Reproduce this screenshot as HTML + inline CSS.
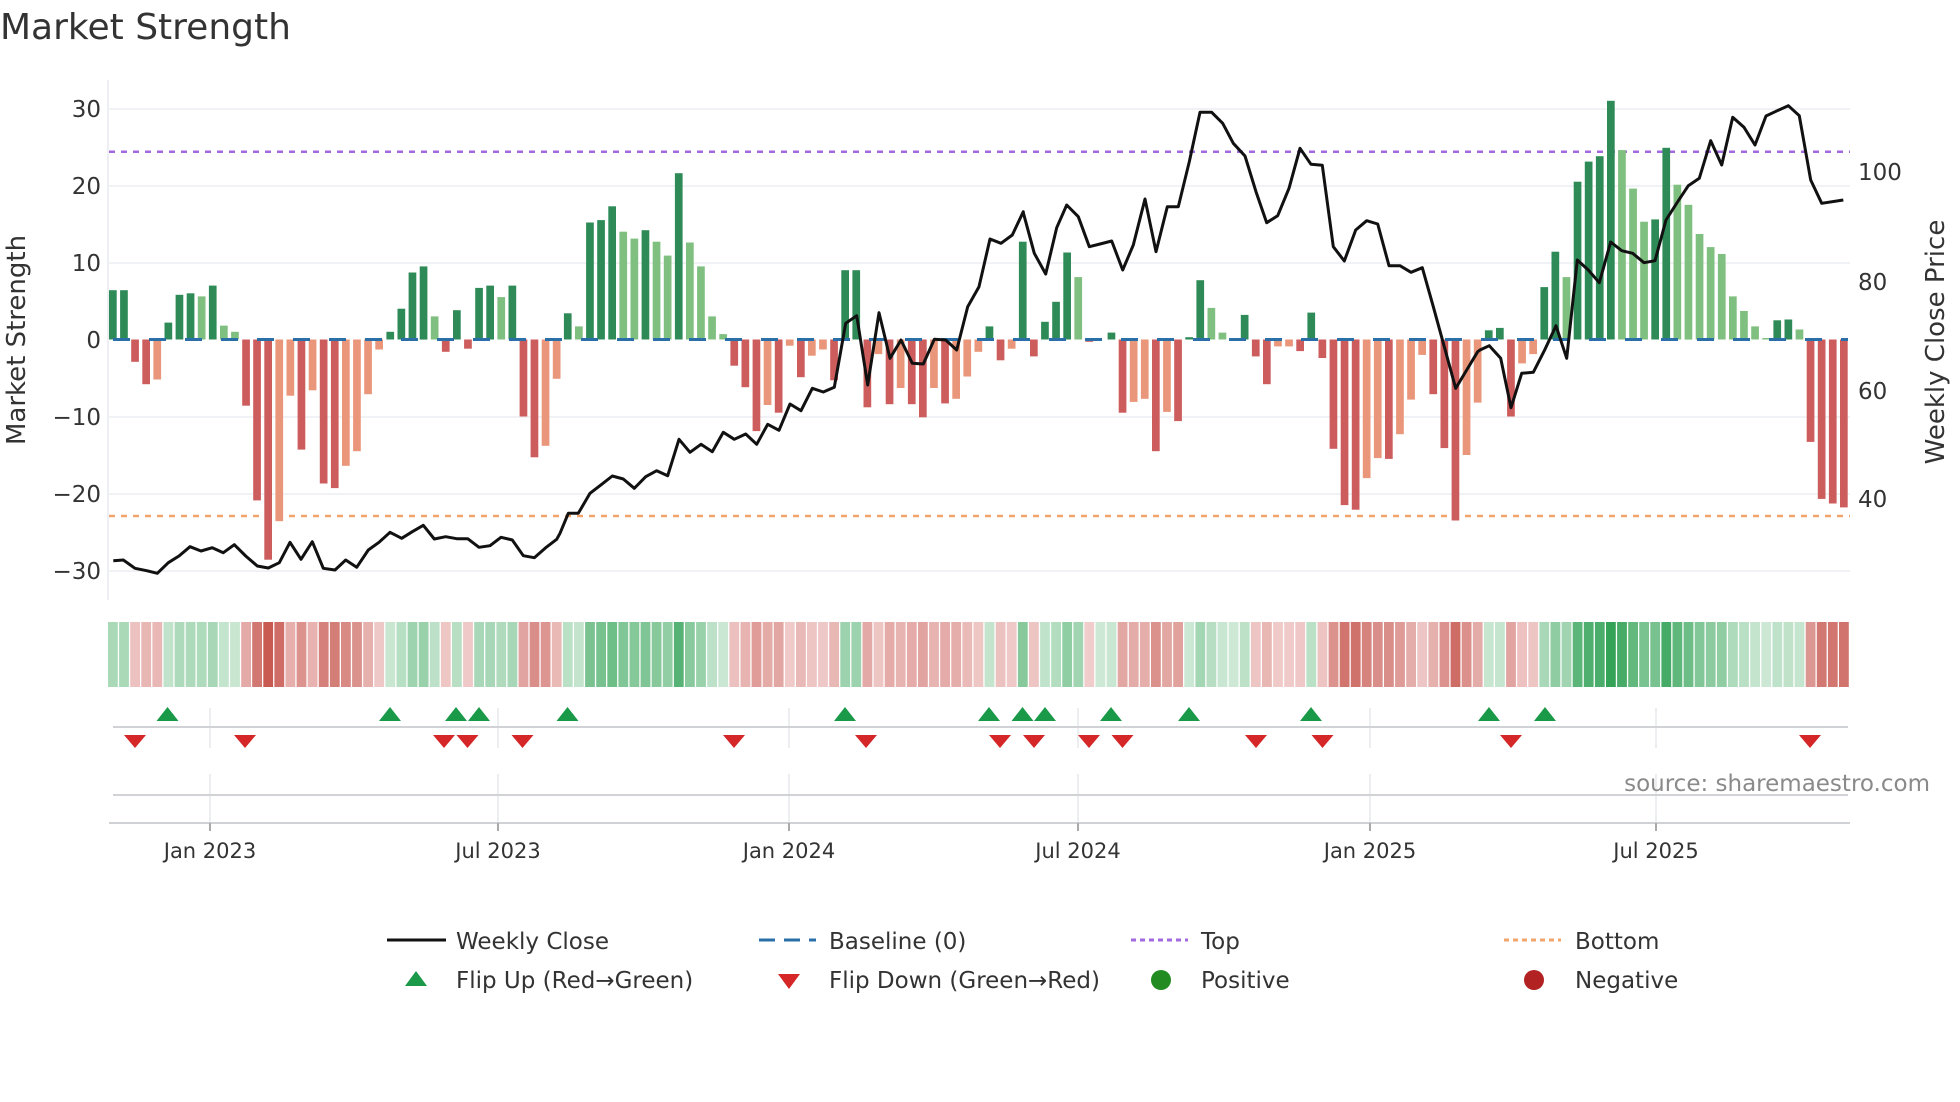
<!DOCTYPE html>
<html><head><meta charset="utf-8"><style>
html,body{margin:0;padding:0;background:#fff;width:1960px;height:1102px;overflow:hidden}
svg{display:block;font-family:"DejaVu Sans","Liberation Sans",sans-serif}
</style></head><body>
<svg id="s" width="1960" height="1102" viewBox="0 0 1960 1102" xmlns="http://www.w3.org/2000/svg">
<rect width="1960" height="1102" fill="#fff"/>
<text x="0" y="39" font-size="36" fill="#333">Market Strength</text>
<g id="grid" stroke="#eceef3" stroke-width="1.5">
<line x1="109" y1="109" x2="1850" y2="109"/><line x1="109" y1="186" x2="1850" y2="186"/>
<line x1="109" y1="263" x2="1850" y2="263"/><line x1="109" y1="417" x2="1850" y2="417"/>
<line x1="109" y1="494" x2="1850" y2="494"/><line x1="109" y1="571" x2="1850" y2="571"/>
</g>
<line x1="108" y1="80" x2="108" y2="600" stroke="#e8eaee" stroke-width="1.5"/>
<g font-size="23" fill="#333" text-anchor="end">
<text x="101" y="117">30</text><text x="101" y="194">20</text><text x="101" y="271">10</text>
<text x="101" y="348">0</text><text x="101" y="425">−10</text><text x="101" y="502">−20</text><text x="101" y="579">−30</text>
</g>
<g font-size="23" fill="#333">
<text x="1858" y="180">100</text><text x="1858" y="290">80</text><text x="1858" y="399">60</text><text x="1858" y="507">40</text>
</g>
<text transform="translate(25,340) rotate(-90)" font-size="26" fill="#333" text-anchor="middle">Market Strength</text>
<text transform="translate(1944,342) rotate(-90)" font-size="26" fill="#333" text-anchor="middle">Weekly Close Price</text>
<line x1="109" y1="151.7" x2="1850" y2="151.7" stroke="#a36ae0" stroke-width="2.5" stroke-dasharray="6 6"/>
<line x1="109" y1="516" x2="1850" y2="516" stroke="#f0a56c" stroke-width="2.5" stroke-dasharray="6 6"/>
<g id="bars"></g>
<line x1="113" y1="339.5" x2="1848" y2="339.5" stroke="#2a6fa8" stroke-width="3" stroke-dasharray="17 19"/>
<polyline id="price" fill="none" stroke="#111" stroke-width="3" stroke-linejoin="round"/>
<g id="heat"></g>
<g stroke="#e6e8ec" stroke-width="1.5">
<line x1="210" y1="708" x2="210" y2="748"/><line x1="498" y1="708" x2="498" y2="748"/><line x1="789" y1="708" x2="789" y2="748"/>
<line x1="1078" y1="708" x2="1078" y2="748"/><line x1="1370" y1="708" x2="1370" y2="748"/><line x1="1656" y1="708" x2="1656" y2="748"/>
<line x1="210" y1="774" x2="210" y2="823"/><line x1="498" y1="774" x2="498" y2="823"/><line x1="789" y1="774" x2="789" y2="823"/>
<line x1="1078" y1="774" x2="1078" y2="823"/><line x1="1370" y1="774" x2="1370" y2="823"/><line x1="1656" y1="774" x2="1656" y2="823"/>
</g>
<line x1="113" y1="727" x2="1848" y2="727" stroke="#d0d2d6" stroke-width="2"/>
<line x1="113" y1="795" x2="1848" y2="795" stroke="#d0d2d6" stroke-width="2"/>
<line x1="109" y1="823" x2="1850" y2="823" stroke="#cfd1d5" stroke-width="2"/>
<g stroke="#aaa" stroke-width="2">
<line x1="210" y1="823" x2="210" y2="831"/><line x1="498" y1="823" x2="498" y2="831"/><line x1="789" y1="823" x2="789" y2="831"/>
<line x1="1078" y1="823" x2="1078" y2="831"/><line x1="1370" y1="823" x2="1370" y2="831"/><line x1="1656" y1="823" x2="1656" y2="831"/>
</g>
<g id="marks"></g>
<text x="1930" y="791" font-size="23" fill="#8a8a8a" text-anchor="end">source: sharemaestro.com</text>
<g font-size="21" fill="#333" text-anchor="middle">
<text x="210" y="858">Jan 2023</text><text x="498" y="858">Jul 2023</text><text x="789" y="858">Jan 2024</text>
<text x="1078" y="858">Jul 2024</text><text x="1370" y="858">Jan 2025</text><text x="1656" y="858">Jul 2025</text>
</g>
<g font-size="23" fill="#333">
<line x1="387" y1="940" x2="446" y2="940" stroke="#111" stroke-width="3"/>
<text x="456" y="949">Weekly Close</text>
<line x1="759" y1="940" x2="816" y2="940" stroke="#2a6fa8" stroke-width="3" stroke-dasharray="16 9"/>
<text x="829" y="949">Baseline (0)</text>
<line x1="1131" y1="940" x2="1188" y2="940" stroke="#a36ae0" stroke-width="3" stroke-dasharray="5 4"/>
<text x="1201" y="949">Top</text>
<line x1="1504" y1="940" x2="1561" y2="940" stroke="#f0a56c" stroke-width="3" stroke-dasharray="5 4"/>
<text x="1575" y="949">Bottom</text>
<polygon points="416,971 427,986 405,986" fill="#1a9a48"/>
<text x="456" y="988">Flip Up (Red→Green)</text>
<polygon points="778,974 800,974 789,989" fill="#d62728"/>
<text x="829" y="988">Flip Down (Green→Red)</text>
<circle cx="1161" cy="980" r="10" fill="#228b22"/>
<text x="1201" y="988">Positive</text>
<circle cx="1534" cy="980" r="10" fill="#b22222"/>
<text x="1575" y="988">Negative</text>
</g>
</svg>
<script>
var NS="http://www.w3.org/2000/svg";
function el(t,a,p){var e=document.createElementNS(NS,t);for(var k in a)e.setAttribute(k,a[k]);p.appendChild(e);return e;}
var raw="6.4D,6.4D,-2.9D,-5.8D,-5.2L,2.2D,5.8D,6.0D,5.6L,7.0D,1.8L,1.0L,-8.6D,-20.9D,-28.6D,-23.6L,-7.3L,-14.3D,-6.6L,-18.7D,-19.3D,-16.4L,-14.5L,-7.1L,-1.3L,1.0D,4.0D,8.7D,9.5D,3.0L,-1.6D,3.8D,-1.2D,6.7D,7.0D,5.5L,7.0D,-10D,-15.3D,-13.8L,-5.1L,3.4D,1.7L,15.2D,15.5D,17.3D,14.0L,13.1L,14.2D,12.7L,10.9L,21.6D,12.6L,9.5L,3.0L,0.7L,-3.4D,-6.2D,-11.9D,-8.5L,-9.5D,-0.8L,-4.9D,-2.1L,-1.3L,-5.3D,9.0D,9.0D,-8.8D,-1.9L,-8.4D,-6.3L,-8.4D,-10.1D,-6.3L,-8.3D,-7.7L,-4.8L,-1.6L,1.7D,-2.7D,-1.2L,12.7D,-2.2D,2.3D,4.9D,11.3D,8.1L,-0.3D,0D,0.9D,-9.5D,-8.1L,-7.7L,-14.5D,-9.4L,-10.6D,0.3D,7.7D,4.1L,0.9L,0L,3.2D,-2.2D,-5.8D,-0.9L,-0.9L,-1.5D,3.5D,-2.4D,-14.2D,-21.5D,-22.1D,-18.0L,-15.4L,-15.5D,-12.3L,-7.8L,-2.0L,-7.1D,-14.1D,-23.5D,-15.0L,-8.2L,1.2D,1.5D,-10D,-3.1L,-1.9L,6.8D,11.4D,8.1L,20.5D,23.1D,23.8D,31.0D,24.6L,19.6L,15.3L,15.6D,24.9D,20.1L,17.5L,13.7L,12.0L,11.1L,5.6L,3.7L,1.7L,0.2L,2.5D,2.6D,1.3L,-13.3D,-20.7D,-21.3D,-21.8D".split(",");
var bars=document.getElementById("bars"),heat=document.getElementById("heat");
var Z=339.5,K=7.7,P=11.096;
function mix(a,b,t){return "rgb("+a.map(function(v,i){return Math.round(v+(b[i]-v)*t)}).join(",")+")";}
raw.forEach(function(s,i){
  var v=parseFloat(s),d=s.slice(-1)=="D",x=109+i*P;
  var c=v>=0?(d?"#2e8b57":"#7fbf7f"):(d?"#cd5c5c":"#e9967a");
  var h=Math.abs(v)*K;
  if(h>0.3) el("rect",{x:x.toFixed(1),y:(v>=0?Z-h:Z).toFixed(1),width:7.7,height:h.toFixed(1),fill:c},bars);
  var t=Math.min(Math.abs(v)/28,1);t=0.15+0.85*t;
  var hc=v>=0?mix([232,245,235],[52,163,88],t):mix([247,226,226],[200,90,82],t);
  el("rect",{x:(108+i*P).toFixed(1),y:622,width:9.8,height:65,fill:hc},heat);
});
var pts=[];
function add(off,arr){for(var i=0;i<arr.length;i+=2)pts.push((off+arr[i]/3).toFixed(1)+","+(90+arr[i+1]/3).toFixed(1));}
add(100,[40,1412,70,1410,105,1435,140,1442,172,1450,205,1418,237,1398,270,1370,303,1383,337,1373,370,1388,403,1364,437,1398,472,1428,505,1434,538,1418,570,1357,603,1408,637,1355,670,1435,705,1440,737,1410,770,1432,805,1380,837,1357,870,1327,905,1345,937,1325,970,1306,1003,1347,1037,1340,1070,1346,1103,1346,1137,1372,1170,1367,1203,1342,1237,1350,1270,1397,1303,1403,1337,1373,1370,1348]);
add(560,[0,1330,25,1270,55,1270,90,1210,125,1183,157,1158,190,1167,223,1195,257,1160,290,1142,323,1157,357,1048,390,1087,423,1063,457,1085,490,1027,523,1048,557,1032,590,1063,623,1003,657,1021,690,942,723,962,757,895,790,906,823,892,857,700,890,677,923,885,957,668,990,805,1023,750,1057,820,1090,822,1123,748,1157,750,1190,780,1223,650,1257,590,1290,447,1323,460,1357,435,1390,365]);
add(1020,[10,368,43,490,77,552,110,413,140,345,175,380,208,470,240,462,275,453,308,540,340,465,375,327,408,485,442,350,475,350,508,215,540,67,575,67,608,100,640,160,675,198,708,305,740,398,773,377,807,295,840,175,873,223,907,226,940,470,973,513,1007,420,1040,392,1073,402,1107,527,1140,527,1173,547,1207,533,1240,650,1307,895,1340,840,1373,785]);
add(1480,[0,780,28,767,62,805,93,953,125,850,160,847,195,778,228,707,260,805,292,510,325,540,358,578,392,456,425,482,458,490,492,518,525,512,558,390,592,337,625,287,658,265,692,152,725,225,758,82,792,112,825,165,858,78,892,62,925,47,958,77,992,270,1025,340,1090,330]);
document.getElementById("price").setAttribute("points",pts.join(" "));
var m=document.getElementById("marks");
[167.5,390,456,479,567.5,845,989,1022.5,1045,1111,1189,1311,1489,1545].forEach(function(x){el("polygon",{points:x+",707 "+(x+11)+",721 "+(x-11)+",721",fill:"#1a9a48"},m);});
[135,245,444,467.5,522.5,734,866,1000,1034,1089,1122.5,1256,1322.5,1511,1810].forEach(function(x){el("polygon",{points:(x-11)+",735 "+(x+11)+",735 "+x+",748",fill:"#d62728"},m);});
</script>
</body></html>
